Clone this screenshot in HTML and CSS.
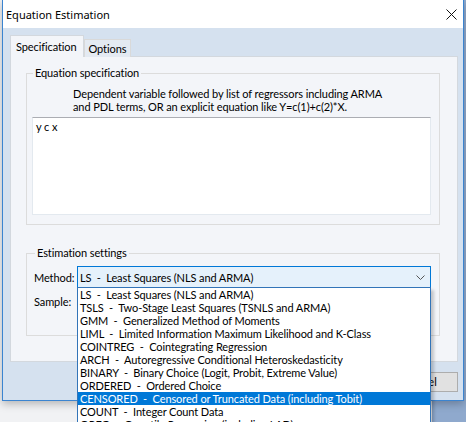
FILE: index.html
```html
<!DOCTYPE html>
<html>
<head>
    <title>Equation Estimation</title>
    <link rel="stylesheet" href="styles.css">
</head>
<body>
    <div class="window">
        <div class="titlebar">
            <span class="title">Equation Estimation</span>
            <svg class="close" width="11" height="11" viewBox="0 0 11 11">
                <path d="M0.5 0.5 L10.5 10.5 M10.5 0.5 L0.5 10.5" stroke="#111" stroke-width="1" fill="none"/>
            </svg>
        </div>

        <div class="client">
            <div class="tabs">
                <div class="tab active">Specification</div>
                <div class="tab">Options</div>
            </div>

            <div class="panel">
                <fieldset class="group group-spec">
                    <legend>Equation specification</legend>
                    <p class="hint">Dependent variable followed by list of regressors including ARMA<br>and PDL terms, OR an explicit equation like Y=c(1)+c(2)*X.</p>
                    <div class="editor">y c x</div>
                </fieldset>

                <fieldset class="group group-settings">
                    <legend>Estimation settings</legend>
                    <div class="row">
                        <span class="label">Method:</span>
                        <div class="combo">
                            <div class="combo-box">
                                <span>LS  -  Least Squares (NLS and ARMA)</span>
                                <svg width="9" height="5" viewBox="0 0 9 5">
                                    <path d="M0.5 0.5 L4.5 4.5 L8.5 0.5" stroke="#555" stroke-width="1" fill="none"/>
                                </svg>
                            </div>
                            <ul class="combo-list">
                                <li>LS  -  Least Squares (NLS and ARMA)</li>
                                <li>TSLS  -  Two-Stage Least Squares (TSNLS and ARMA)</li>
                                <li>GMM  -  Generalized Method of Moments</li>
                                <li>LIML  -  Limited Information Maximum Likelihood and K-Class</li>
                                <li>COINTREG  -  Cointegrating Regression</li>
                                <li>ARCH  -  Autoregressive Conditional Heteroskedasticity</li>
                                <li>BINARY  -  Binary Choice (Logit, Probit, Extreme Value)</li>
                                <li>ORDERED  -  Ordered Choice</li>
                                <li class="selected">CENSORED  -  Censored or Truncated Data (including Tobit)</li>
                                <li>COUNT  -  Integer Count Data</li>
                                <li>QREG  -  Quantile Regression (including LAD)</li>
                            </ul>
                        </div>
                    </div>
                    <div class="row">
                        <span class="label">Sample:</span>
                        <div class="sample">1 100</div>
                    </div>
                </fieldset>
            </div>

            <div class="buttons">
                <button class="btn">OK</button>
                <button class="btn">Cancel</button>
            </div>
        </div>
    </div>
</body>
</html>
```

FILE: styles.css
```css
html, body { margin: 0; height: 100%; overflow: hidden; }
body { background: linear-gradient(to right, #f1f2f4 0, #f1f2f4 432px, #8fa9cd 432px); font-family: Lato, "Noto Sans", sans-serif; font-size: 11px; letter-spacing: -0.1px; color: #000; }

.window { margin-left: 2px; width: 462px; height: 401px; box-sizing: border-box; border: 1px solid #3b84d0; border-top: 0; background: #d5e1ef; box-shadow: 0 3px 8px rgba(0,0,0,0.25); }
.titlebar { height: 28px; background: #fff; display: flex; align-items: center; justify-content: space-between; padding: 0 6px 0 3px; }
.title { font-family: "Noto Sans", sans-serif; font-size: 11px; letter-spacing: 0; }
.close { margin-top: 1px; }

.client { padding: 7px 5px 0 7px; }
.tabs { display: flex; align-items: flex-end; height: 21px; }
.tab { height: 17px; line-height: 18px; padding: 0 4px; border: 1px solid #d9d9d9; border-bottom: 0; background: #e4eaf2; margin-bottom: -1px; position: relative; }
.tab.active { height: 21px; line-height: 21px; padding: 0 6px 0 5px; background: #f3f5f9; z-index: 1; border-color: #d3d8de; }

.panel { height: 306px; width: 448px; box-sizing: border-box; border: 1px solid #d3d8de; background: #f3f5f9; padding-top: 8px; }

.group { margin: 0 0 0 15px; width: 414px; box-sizing: border-box; border: 1px solid #dcdcdc; padding: 0 6px 0 5px; }
.group legend { padding: 0 2px; margin-left: 1px; line-height: 16px; }
.group-spec { height: 160px; }
.group-settings { height: 91px; margin-top: 20px; padding: 5px 6px 0 7px; }

.hint { margin: 6px 0 0 41px; line-height: 13px; }
.editor { margin-top: 4px; height: 98px; width: 399px; box-sizing: border-box; background: #fff; border: 1px solid #e3e9ef; border-top-color: #abadb3; padding: 2px 3px; line-height: 14px; }

.row { display: flex; align-items: center; height: 22px; }
.row + .row { margin-top: 2px; }
.label { width: 43px; }
.combo { position: relative; }
.combo-box { width: 354px; height: 22px; box-sizing: border-box; border: 1px solid #0078d7; background: #e5f1fb; display: flex; align-items: center; justify-content: space-between; padding: 1px 5px 0 2px; white-space: pre; }
.combo-list { position: absolute; top: 21px; left: 0; width: 354px; box-sizing: border-box; margin: 0; padding: 0; list-style: none; background: #fff; border: 1px solid #3274b8; box-shadow: 3px 3px 3px rgba(0,0,0,0.2); z-index: 5; }
.combo-list li { height: 13px; line-height: 14px; padding-left: 2px; white-space: pre; }
.combo-list li.selected { background: #0078d7; color: #fff; }
.sample { width: 354px; height: 20px; background: #fff; border: 1px solid #abadb3; box-sizing: border-box; padding: 2px; }

.buttons { display: flex; justify-content: flex-end; gap: 6px; margin-top: 10px; }
.btn { width: 75px; height: 20px; padding: 0; background: #e1e1e1; border: 1px solid #adadad; font-family: Lato, "Noto Sans", sans-serif; font-size: 11px; line-height: 16px; }
```
